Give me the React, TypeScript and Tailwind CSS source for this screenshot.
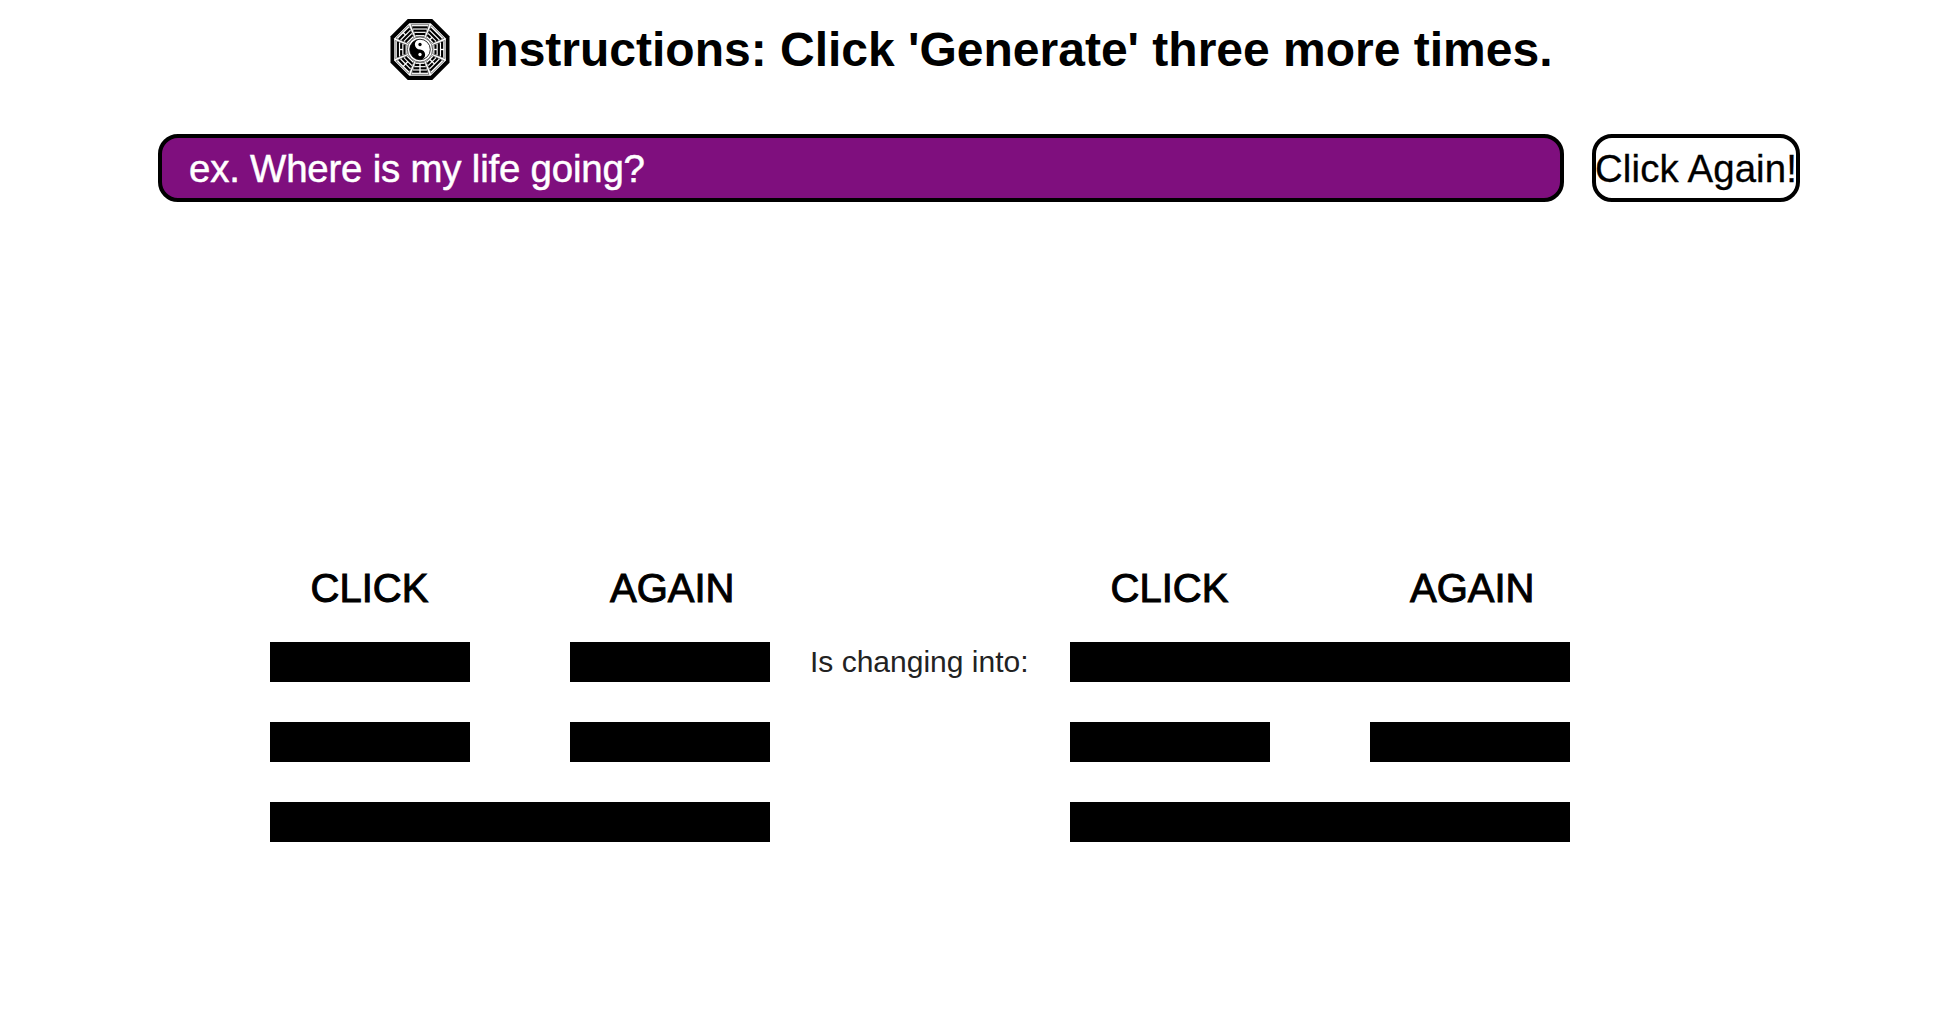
const TRIGRAMS = ["111", "110", "010", "100", "000", "001", "101", "011"];

function BaguaLogo() {
  return (
    <svg viewBox="-90 -92 180 184" className="h-[61px] w-[60px] shrink-0" aria-label="Bagua">
      <g>
        <polygon points="-37,-92 37,-92 89,-40 89,40 37,92 -37,92 -89,40 -89,-40" fill="#000" />
        <polygon points="-32,-79 32,-79 78,-33 78,33 32,79 -32,79 -78,33 -78,-33" fill="#fff" />
        {TRIGRAMS.map((t, i) => (
          <g key={t} transform={`rotate(${i * 45})`}>
            <polygon points="-27,-75 27,-75 13,-39 -13,-39" fill="#fff" stroke="#444" strokeWidth="2" />
            {[0, 1, 2].map((r) => {
              const half = 23 - r * 4;
              const y = -70 + r * 10;
              return t[r] === "1" ? (
                <rect key={r} x={-half} y={y} width={half * 2} height="6.5" fill="#000" />
              ) : (
                <g key={r} fill="#000">
                  <rect x={-half} y={y} width={half - 2} height="6.5" />
                  <rect x="2" y={y} width={half - 2} height="6.5" />
                </g>
              );
            })}
          </g>
        ))}
        <circle r="38" fill="#fff" stroke="#444" strokeWidth="2.5" />
        <circle r="31" fill="#fff" stroke="#000" strokeWidth="2.5" />
        <path d="M0-31A31 31 0 0 0 0 31A15.500 15.500 0 0 0 0 0A15.500 15.500 0 0 1 0-31Z" fill="#000" />
        <circle cy="-15" r="5" fill="#000" />
        <circle cy="15" r="5" fill="#fff" />
      </g>
    </svg>
  );
}

function Line({ solid }: { solid: boolean }) {
  if (solid) return <div className="h-10 w-[500px] bg-black" />;
  return (
    <div className="flex w-[500px] justify-between">
      <div className="h-10 w-[200px] bg-black" />
      <div className="h-10 w-[200px] bg-black" />
    </div>
  );
}

function Hexagram({ lines }: { lines: boolean[] }) {
  return (
    <div className="flex w-[500px] flex-col">
      <div className="mb-7 flex h-[52px] justify-between text-[40px] leading-[52px] text-black [-webkit-text-stroke:1px_#000]">
        <span className="w-[200px] pl-[40.500px]">CLICK</span>
        <span className="w-[200px] pl-[40px]">AGAIN</span>
      </div>
      <div className="flex flex-col gap-10">
        {lines.map((solid, i) => (
          <Line key={i} solid={solid} />
        ))}
      </div>
    </div>
  );
}

export default function App() {
  return (
    <main className="h-[1032px] w-[1960px] overflow-hidden bg-white font-['Liberation_Sans',Arial,sans-serif] text-black">
      <header className="flex h-[134px] items-start pl-[390px] pt-[19px]">
        <BaguaLogo />
        <h1 className="ml-[26px] whitespace-nowrap text-[48px] font-bold leading-[62px]">
          Instructions: Click 'Generate' three more times.
        </h1>
      </header>
      <form className="flex h-[68px] gap-7 pl-[158px]" onSubmit={(e) => e.preventDefault()}>
        <input
          className="h-[68px] w-[1406px] rounded-[20px] border-4 border-black bg-[#7f0f7e] pl-[27px] pt-[2px] text-[38.400px] tracking-[-0.190px] text-white outline-none [-webkit-text-stroke:0.500px_#fff] placeholder:text-white placeholder:opacity-100"
          placeholder="ex. Where is my life going?"
        />
        <button className="flex h-[68px] w-[208px] items-center justify-center whitespace-nowrap rounded-[20px] border-4 border-black bg-white pt-[2px] text-[38.400px] tracking-[0.120px] [-webkit-text-stroke:0.300px_#000]">
          Click Again!
        </button>
      </form>
      <section className="mt-[360px] flex pl-[270px]">
        <Hexagram lines={[false, false, true]} />
        <p className="w-[300px] whitespace-nowrap pl-[40px] pt-[80px] text-[30px] leading-[40px] text-[#222]">Is changing into:</p>
        <Hexagram lines={[true, false, true]} />
      </section>
    </main>
  );
}
